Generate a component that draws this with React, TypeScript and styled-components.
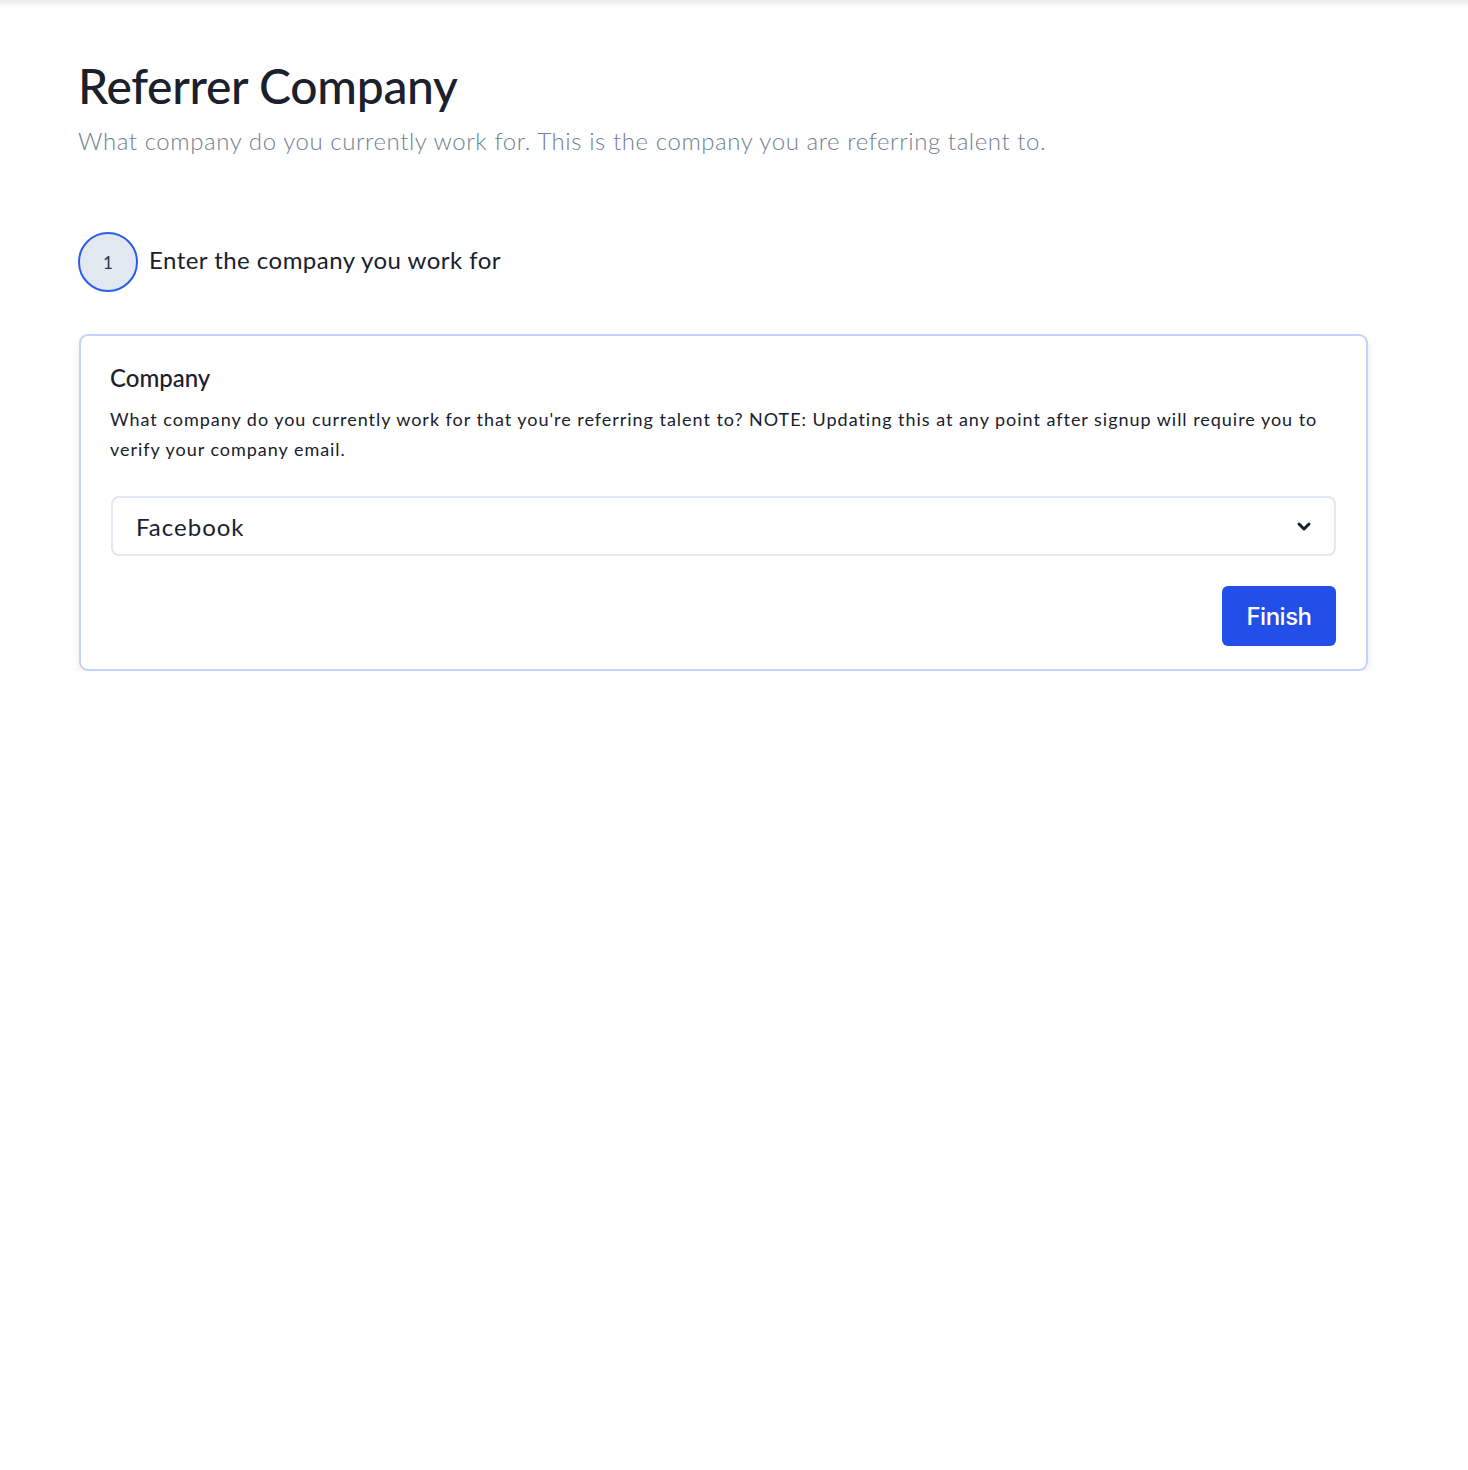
import React from "react";
import styled, { createGlobalStyle } from "styled-components";

const Global = createGlobalStyle`
  html, body { margin: 0; padding: 0; background: #ffffff; }
  body { font-family: "Lato", "Noto Sans", sans-serif; color: #1a202c; }
  * { box-sizing: border-box; }
`;

const TopShade = styled.div`
  height: 8px;
  background: linear-gradient(to bottom, rgba(0,0,0,0.08), rgba(0,0,0,0));
`;

const Page = styled.main`
  padding: 50px 100px 0 78px;
`;

const Title = styled.h1`
  margin: 0;
  font-size: 48px;
  font-weight: 500;
  line-height: 56px;
  color: #1a202c;
  letter-spacing: -0.3px;
`;

const Subtitle = styled.p`
  margin: 11px 0 0 0;
  font-size: 24px;
  font-weight: 300;
  line-height: 32px;
  letter-spacing: 0.58px;
  color: #718096;
`;

const Step = styled.div`
  display: flex;
  align-items: center;
  gap: 11px;
  margin-top: 75px;
`;

const StepBadge = styled.div`
  width: 60px;
  height: 60px;
  border-radius: 50%;
  border: 2px solid #2b5cf0;
  background: #e2e8f0;
  display: flex;
  align-items: center;
  justify-content: center;
  font-size: 17px;
  color: #2d3748;
`;

const StepLabel = styled.span`
  font-size: 24px;
  line-height: 28px;
  letter-spacing: 0.47px;
  color: #1a202c;
  margin-top: -4px;
`;

const Card = styled.section`
  margin: 42px 0 0 1px;
  border: 2px solid #c3d2fa;
  border-radius: 9px;
  box-shadow: 0 4px 8px rgba(0, 0, 0, 0.08);
  padding: 26px 30px 23px 29px;
  display: flex;
  flex-direction: column;
`;

const CardTitle = styled.h2`
  margin: 0;
  font-size: 24px;
  font-weight: 500;
  line-height: 32px;
  color: #1a202c;
`;

const CardText = styled.p`
  margin: 10px 0 0 0;
  font-size: 18px;
  line-height: 30px;
  letter-spacing: 0.97px;
  color: #1a202c;
`;

const SelectBox = styled.div`
  margin-top: 32px;
  margin-left: 1px;
  height: 60px;
  border: 2px solid #e2e8f0;
  border-radius: 8px;
  display: flex;
  align-items: center;
  justify-content: space-between;
  padding: 0 18px 0 23px;
  font-size: 24px;
  letter-spacing: 1px;
  color: #1a202c;
`;

const Actions = styled.div`
  display: flex;
  justify-content: flex-end;
  margin-top: 30px;
`;

const FinishButton = styled.button`
  width: 114px;
  height: 60px;
  border: none;
  border-radius: 6px;
  background: #234fe9;
  color: #ffffff;
  font-family: "Inter", "Noto Sans", sans-serif;
  font-size: 24px;
  font-weight: 500;
  letter-spacing: -0.5px;
  cursor: pointer;
`;

export default function App() {
  return (
    <>
      <Global />
      <TopShade />
      <Page>
        <Title>Referrer Company</Title>
        <Subtitle>
          What company do you currently work for. This is the company you are referring talent to.
        </Subtitle>
        <Step>
          <StepBadge>1</StepBadge>
          <StepLabel>Enter the company you work for</StepLabel>
        </Step>
        <Card>
          <CardTitle>Company</CardTitle>
          <CardText>
            What company do you currently work for that you're referring talent to? NOTE: Updating this at any point after signup will require you to verify your company email.
          </CardText>
          <SelectBox>
            <span>Facebook</span>
            <svg width="24" height="24" viewBox="0 0 24 24" fill="none" stroke="#1a202c" strokeWidth="3" strokeLinecap="round" strokeLinejoin="round">
              <path d="M7 10l5 5 5-5" />
            </svg>
          </SelectBox>
          <Actions>
            <FinishButton>Finish</FinishButton>
          </Actions>
        </Card>
      </Page>
    </>
  );
}
